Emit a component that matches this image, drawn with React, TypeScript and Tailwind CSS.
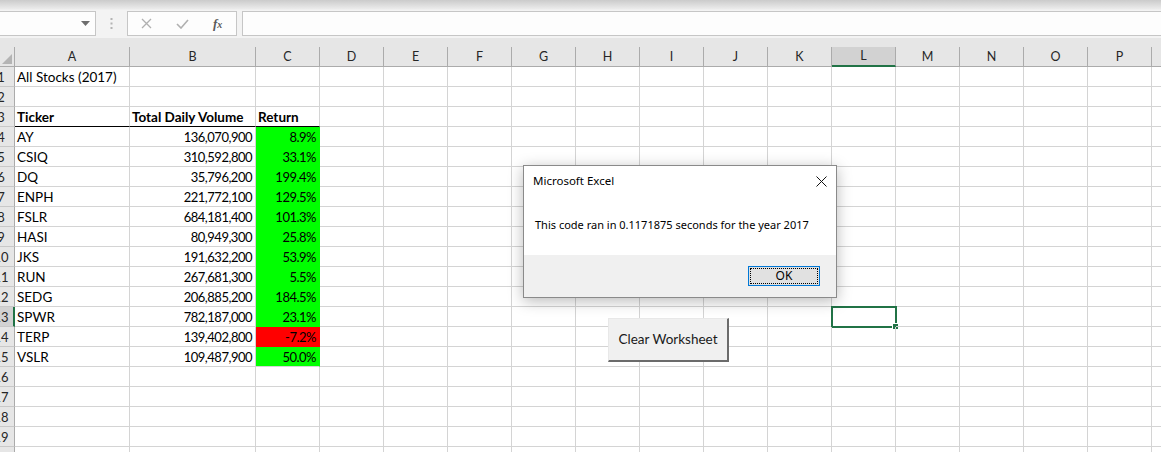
import React from 'react';

const letters = ['A', 'B', 'C', 'D', 'E', 'F', 'G', 'H', 'I', 'J', 'K', 'L', 'M', 'N', 'O', 'P', 'Q'];

const stocks = [
    { t: 'AY', v: '136,070,900', r: '8.9%', up: true },
    { t: 'CSIQ', v: '310,592,800', r: '33.1%', up: true },
    { t: 'DQ', v: '35,796,200', r: '199.4%', up: true },
    { t: 'ENPH', v: '221,772,100', r: '129.5%', up: true },
    { t: 'FSLR', v: '684,181,400', r: '101.3%', up: true },
    { t: 'HASI', v: '80,949,300', r: '25.8%', up: true },
    { t: 'JKS', v: '191,632,200', r: '53.9%', up: true },
    { t: 'RUN', v: '267,681,300', r: '5.5%', up: true },
    { t: 'SEDG', v: '206,885,200', r: '184.5%', up: true },
    { t: 'SPWR', v: '782,187,000', r: '23.1%', up: true },
    { t: 'TERP', v: '139,402,800', r: '-7.2%', up: false },
    { t: 'VSLR', v: '109,487,900', r: '50.0%', up: true },
];

const rowGrid =
    'grid grid-cols-[15px_115px_126px_64px_64px_64px_64px_64px_64px_64px_64px_64px_64px_64px_64px_64px_64px_64px]';

const cell = 'h-[20px] border-r border-b border-[#d4d4d4] flex items-center pt-[2px] overflow-visible whitespace-nowrap';
const num = ' justify-end pr-[3px] text-[13px] tracking-[-0.5px]';

const FormulaBar: React.FC = () => (
    <div className="h-[38px] pt-[11px] flex items-start bg-[linear-gradient(to_bottom,#cbcbcb_0px,#ebebeb_9px,#f3f3f3_10px)]">
        <div className="-ml-px w-[97px] h-[25px] bg-[#fdfdfd] border border-[#c6c6c6] flex items-center justify-end pr-[5px]">
            <svg width="9" height="5" viewBox="0 0 9 5">
                <path d="M0 0h9L4.5 5z" fill="#6e6e6e" />
            </svg>
        </div>
        <div className="w-[31px] h-[25px] flex items-center justify-center">
            <svg width="3" height="11" viewBox="0 0 3 11">
                <rect x="0.5" y="0" width="2" height="2" fill="#b4b4b4" />
                <rect x="0.5" y="4.5" width="2" height="2" fill="#b4b4b4" />
                <rect x="0.5" y="9" width="2" height="2" fill="#b4b4b4" />
            </svg>
        </div>
        <div className="w-[110px] h-[25px] bg-[#fdfdfd] border border-[#c6c6c6] flex items-center">
            <svg className="ml-[13px]" width="11" height="11" viewBox="0 0 11 11">
                <path d="M1 1l9 9M10 1l-9 9" stroke="#b0b0b0" strokeWidth="1.3" />
            </svg>
            <svg className="ml-[24px]" width="13" height="10" viewBox="0 0 13 10">
                <path d="M1 5l4 4 7-8" stroke="#b0b0b0" strokeWidth="1.6" fill="none" />
            </svg>
            <span className="ml-[24px] text-[13px] italic text-[#5a5a5a] font-['Liberation_Serif',serif] font-bold">
                f<span className="text-[10px]">x</span>
            </span>
        </div>
        <div className="ml-[5px] flex-1 h-[25px] bg-[#fdfdfd] border border-[#c6c6c6] -mr-px" />
    </div>
);

const HeaderRow: React.FC = () => (
    <div className="bg-[#e6e6e6] pt-[9px]">
        <div className={rowGrid}>
            <div className="h-[20px] border-r border-b border-[#ababab] flex items-end justify-end p-[2px]">
                <svg width="10" height="10" viewBox="0 0 10 10">
                    <path d="M10 0v10H0z" fill="#b4b4b4" />
                </svg>
            </div>
            {letters.map((l) => {
                const sel = l === 'L';
                return (
                    <div
                        key={l}
                        className={
                            sel
                                ? 'h-[20px] pt-[1px] bg-[#d2d2d2] border-r border-[#ababab] border-b-2 border-b-[#217346] flex items-center justify-center text-[12.5px] text-[#262626]'
                                : 'h-[20px] pt-[1px] border-r border-b border-[#ababab] flex items-center justify-center text-[12.5px] text-[#262626]'
                        }
                    >
                        {l}
                    </div>
                );
            })}
        </div>
    </div>
);

const RowHead: React.FC<{ n: number }> = ({ n }) => {
    const sel = n === 13;
    return (
        <div
            className={
                sel
                    ? 'h-[20px] pt-[2px] overflow-hidden bg-[#d2d2d2] border-b border-[#c8c8c8] border-r-2 border-r-[#217346] flex items-center'
                    : 'h-[20px] pt-[2px] overflow-hidden bg-[#e6e6e6] border-b border-[#c8c8c8] border-r border-r-[#ababab] flex items-center'
            }
        >
            <div className="shrink-0 w-[28px] -ml-[13px] text-center text-[13px] text-[#262626]">{n}</div>
        </div>
    );
};

const DataRow: React.FC<{ n: number }> = ({ n }) => {
    const s = n >= 4 && n <= 15 ? stocks[n - 4] : null;
    let a: React.ReactNode = null;
    let b: React.ReactNode = null;
    let c: React.ReactNode = null;
    if (n === 1) a = 'All Stocks (2017)';
    if (n === 3) {
        a = <b>Ticker</b>;
        b = <b>Total Daily Volume</b>;
        c = <b>Return</b>;
    }
    if (s) {
        a = s.t;
        b = s.v;
        c = s.r;
    }
    const under = n === 3 ? ' border-b-black' : '';
    let cFill = '';
    if (s) cFill = s.up ? ' bg-[#00ff00] border-r-[#00ff00]' : ' bg-[#ff0000] border-r-[#ff0000]';
    if (s && n < 15) cFill += s.up ? ' border-b-[#00ff00]' : ' border-b-[#ff0000]';
    return (
        <div className={rowGrid}>
            <RowHead n={n} />
            <div className={cell + under + ' pl-[2px]'}>{a}</div>
            <div className={cell + under + (n === 3 ? ' pl-[2px]' : num)}>{b}</div>
            <div className={cell + under + cFill + (n === 3 ? ' pl-[2px]' : num)}>{c}</div>
            {letters.slice(3).map((l) => (
                <div key={l} className={cell + ' relative'}>
                    {l === 'L' && n === 13 && (
                        <div className="absolute -left-px -top-[1px] w-[66px] h-[22px] border-2 border-[#217346]">
                            <div className="absolute -right-[4px] -bottom-[4px] w-[7px] h-[7px] bg-[#217346] border border-white" />
                        </div>
                    )}
                </div>
            ))}
        </div>
    );
};

const MsgBox: React.FC = () => (
    <div className="absolute left-[523px] top-[165px] w-[314px] h-[133px] bg-white border border-[#8a8a8a] shadow-[0_3px_14px_rgba(0,0,0,0.28)] flex flex-col font-['Noto_Sans',sans-serif] text-[#000]">
        <div className="h-[30px] flex items-center justify-between pl-[9px] pr-[9px] text-[11.5px]">
            <span>Microsoft Excel</span>
            <svg width="11" height="11" viewBox="0 0 11 11">
                <path d="M0.5 0.5l10 10M10.5 0.5l-10 10" stroke="#111" strokeWidth="1" />
            </svg>
        </div>
        <div className="flex-1 flex items-center pl-[11px] text-[11px]">
            This code ran in 0.1171875 seconds for the year 2017
        </div>
        <div className="h-[42px] bg-[#f0f0f0] flex items-center justify-end pr-[16px]">
            <div className="w-[72px] h-[20px] border border-[#0078d7] bg-[#e1e1e1] p-[1px]">
                <div className="w-full h-full border border-dotted border-black flex items-center justify-center text-[12px]">
                    OK
                </div>
            </div>
        </div>
    </div>
);

const ClearButton: React.FC = () => (
    <div className="absolute left-[608px] top-[318px] w-[121px] h-[44px] bg-[#f0f0f0] border-t border-l border-[#e8e8e8] border-r-2 border-b-2 border-r-[#6b6b6b] border-b-[#6b6b6b] flex items-center justify-center text-[13.5px] text-[#1a1a1a]">
        Clear Worksheet
    </div>
);

const App: React.FC = () => {
    const rows = Array.from({ length: 20 }, (_, i) => i + 1);
    return (
        <div className="w-[1161px] h-[452px] overflow-hidden bg-white relative font-['Lato','Liberation_Sans',sans-serif] text-[13.5px] text-black">
            <FormulaBar />
            <HeaderRow />
            {rows.map((n) => (
                <DataRow key={n} n={n} />
            ))}
            <MsgBox />
            <ClearButton />
        </div>
    );
};

export default App;
